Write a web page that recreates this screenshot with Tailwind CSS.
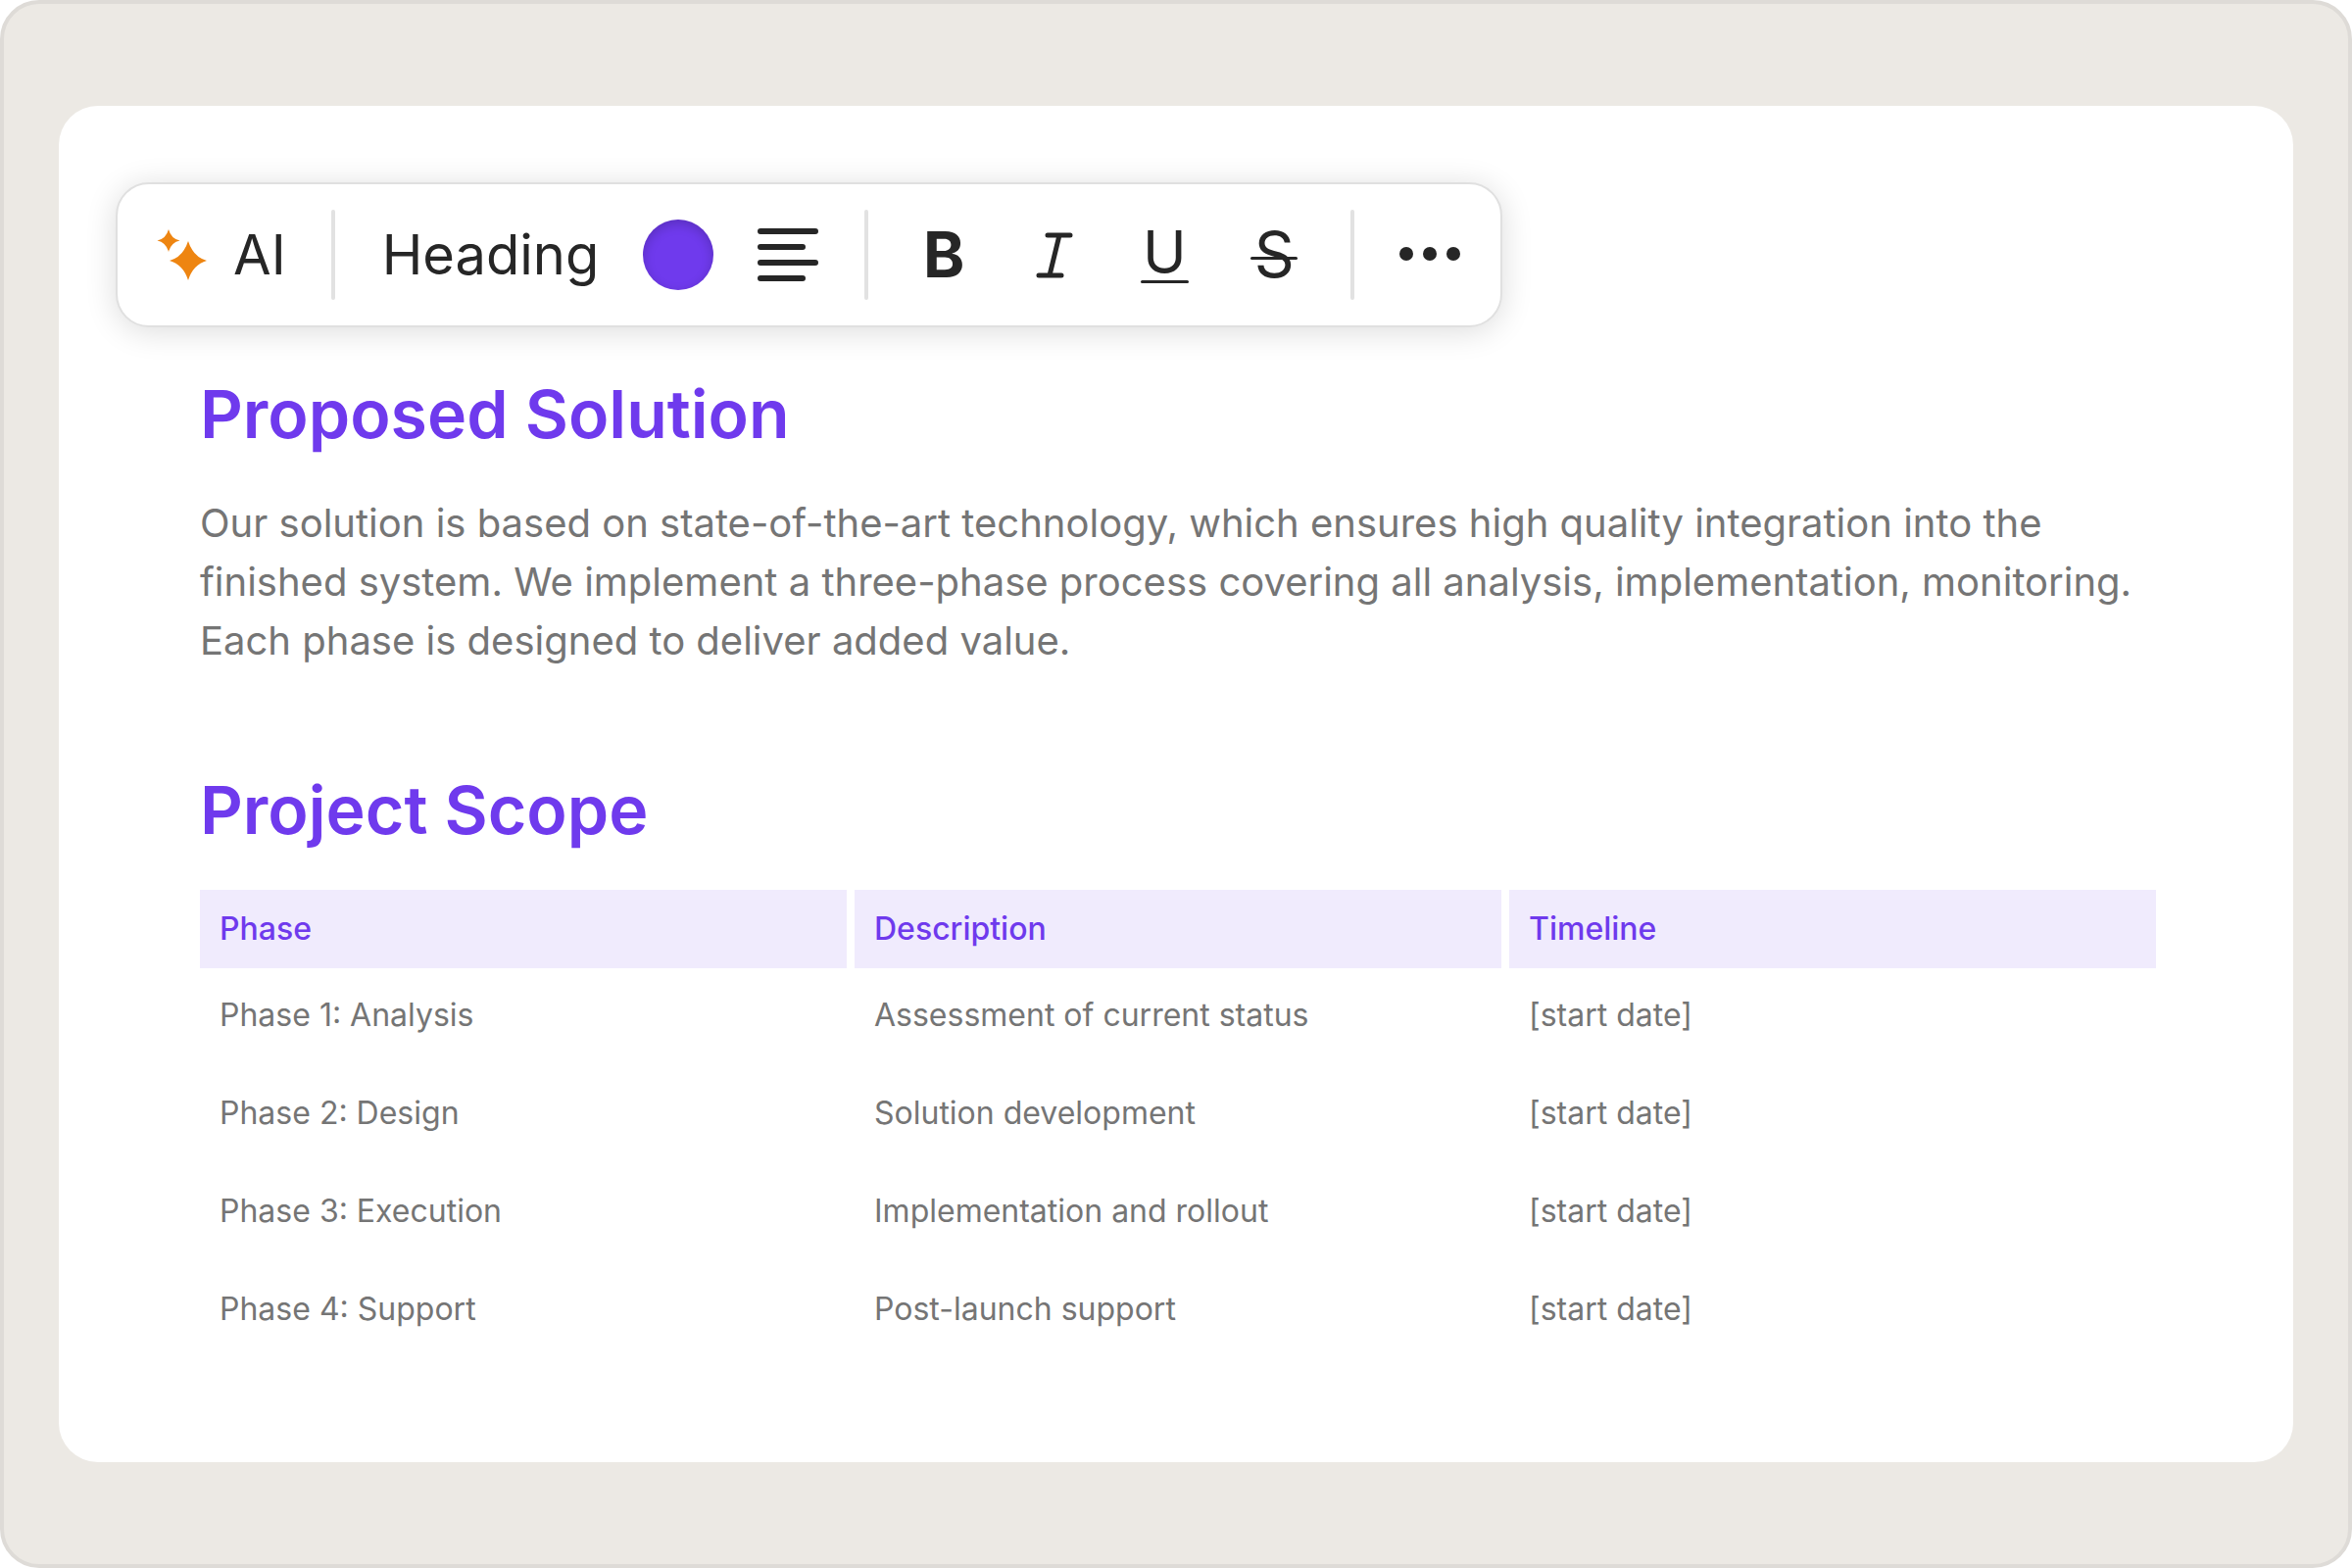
<!DOCTYPE html>
<html lang="en">
<head>
  <meta charset="UTF-8">
  <meta name="viewport" content="width=device-width, initial-scale=1.0">
  <title>Proposal Editor</title>
  <script src="https://cdn.jsdelivr.net/npm/@tailwindcss/browser@4"></script>
</head>
<body class="bg-white font-['Inter',sans-serif]">

  <div class="min-h-screen flex flex-col bg-[#ece9e4] border-4 border-[#dedbd7] rounded-[40px] px-14 py-[104px]">

    <!-- Document -->
    <main class="flex-1 bg-white rounded-[40px] pt-[78px] pb-20">

      <!-- Toolbar -->
      <div role="toolbar" aria-label="Formatting" class="w-fit ml-[58px] flex items-center h-[148px] pl-10 pr-10 bg-white border-2 border-[#e0e0e0] rounded-[34px] shadow-[0_4px_32px_rgba(0,0,0,0.14)] text-[56px] leading-[72px] text-[#262626]">
        <button class="flex items-center gap-[26px]">
          <svg class="w-[52px] h-[52px]" viewBox="0 0 52 52" fill="#ee8511">
            <path d="M12 0Q14.500 9.500 23.500 11.500Q14.500 13.500 12 23Q9.500 13.500 .5 11.500Q9.500 9.500 12 0Z" />
            <path d="M32 12Q37 28 51 32Q37 36 32 52Q27 36 13 32Q27 28 32 12Z" />
          </svg>
          AI
        </button>
        <span class="w-1 h-[92px] rounded-full bg-[#e2e2e2] ml-[46px] mr-12"></span>
        <button>Heading</button>
        <button aria-label="Text color" class="w-[72px] h-[72px] ml-[45px] rounded-full bg-[#6f3aed] shadow-[inset_0_4px_12px_rgba(0,0,0,0.2)]"></button>
        <button aria-label="Align left" class="ml-11">
          <svg class="w-16 h-16" viewBox="0 0 64 64" fill="none" stroke="#262626" stroke-width="6" stroke-linecap="round">
            <path d="M4 8h56M4 24h43M4 40h56M4 56h43" />
          </svg>
        </button>
        <span class="w-1 h-[92px] rounded-full bg-[#e2e2e2] ml-[46px] mr-[45px]"></span>
        <button aria-label="Bold" class="w-16 h-[72px] text-[64px] font-bold">B</button>
        <button aria-label="Italic" class="ml-[49px]">
          <svg class="w-16 h-16" viewBox="0 0 64 64" fill="none" stroke="#262626" stroke-width="5" stroke-linecap="round">
            <path d="M25 12h23M16 53h23M37 12L27 53" />
          </svg>
        </button>
        <button aria-label="Underline" class="ml-12 w-16 h-[72px] pt-1 flex flex-col items-center text-[60px] leading-[58px]">
          U
          <span class="w-[49px] h-[3px] rounded-full bg-[#262626]"></span>
        </button>
        <button aria-label="Strikethrough" class="ml-12 w-16 h-[72px] relative text-[64px]">
          S
          <span class="absolute left-2 right-2 top-[38px] h-[3px] rounded-full bg-[#262626]"></span>
        </button>
        <span class="w-1 h-[92px] rounded-full bg-[#e2e2e2] ml-[46px] mr-[45px]"></span>
        <button aria-label="More">
          <svg class="w-16 h-16" viewBox="0 0 64 64" fill="#262626">
            <circle cx="8" cy="31" r="7" />
            <circle cx="32" cy="31" r="7" />
            <circle cx="56" cy="31" r="7" />
          </svg>
        </button>
      </div>

      <div class="pl-36 pr-[140px] text-[#757575]">
        <h1 class="mt-12 text-[68px] leading-[80px] font-semibold text-[#6f3aed]">Proposed Solution</h1>
        <p class="mt-[42px] text-[40px] leading-[60px]">Our solution is based on state-of-the-art technology, which ensures high quality integration into the finished system. We implement a three-phase process covering all analysis, implementation, monitoring. Each phase is designed to deliver added value.</p>

        <h2 class="mt-[102px] text-[68px] leading-[80px] font-semibold text-[#6f3aed]">Project Scope</h2>

        <!-- Scope table -->
        <div class="mt-[42px] -mx-2">
          <table class="w-full table-fixed border-separate border-spacing-x-2 border-spacing-y-0 text-left text-[32px] leading-[48px]">
            <thead>
              <tr class="text-[#6f3aed]">
                <th class="px-5 py-4 bg-[#f0ebfd] font-medium">Phase</th>
                <th class="px-5 py-4 bg-[#f0ebfd] font-medium">Description</th>
                <th class="px-5 py-4 bg-[#f0ebfd] font-medium">Timeline</th>
              </tr>
            </thead>
            <tbody>
              <tr>
                <td class="px-5 pt-6 pb-7">Phase 1: Analysis</td>
                <td class="px-5 pt-6 pb-7">Assessment of current status</td>
                <td class="px-5 pt-6 pb-7">[start date]</td>
              </tr>
              <tr>
                <td class="px-5 pt-6 pb-7">Phase 2: Design</td>
                <td class="px-5 pt-6 pb-7">Solution development</td>
                <td class="px-5 pt-6 pb-7">[start date]</td>
              </tr>
              <tr>
                <td class="px-5 pt-6 pb-7">Phase 3: Execution</td>
                <td class="px-5 pt-6 pb-7">Implementation and rollout</td>
                <td class="px-5 pt-6 pb-7">[start date]</td>
              </tr>
              <tr>
                <td class="px-5 pt-6 pb-7">Phase 4: Support</td>
                <td class="px-5 pt-6 pb-7">Post-launch support</td>
                <td class="px-5 pt-6 pb-7">[start date]</td>
              </tr>
            </tbody>
          </table>
        </div>
      </div>
    </main>
  </div>

</body>
</html>
